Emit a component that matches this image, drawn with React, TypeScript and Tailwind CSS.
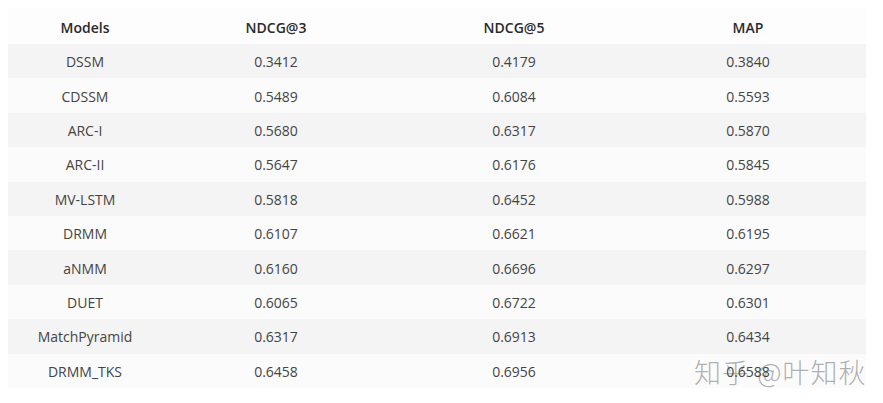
import React from "react";

const rows: [string, string, string, string][] = [
  ["DSSM", "0.3412", "0.4179", "0.3840"],
  ["CDSSM", "0.5489", "0.6084", "0.5593"],
  ["ARC-I", "0.5680", "0.6317", "0.5870"],
  ["ARC-II", "0.5647", "0.6176", "0.5845"],
  ["MV-LSTM", "0.5818", "0.6452", "0.5988"],
  ["DRMM", "0.6107", "0.6621", "0.6195"],
  ["aNMM", "0.6160", "0.6696", "0.6297"],
  ["DUET", "0.6065", "0.6722", "0.6301"],
  ["MatchPyramid", "0.6317", "0.6913", "0.6434"],
  ["DRMM_TKS", "0.6458", "0.6956", "0.6588"],
];

export default function App() {
  return (
    <div
      className="relative w-[883px] h-[403px] bg-white overflow-hidden"
      style={{ fontFamily: '"Open Sans", "Noto Sans", "Noto Sans CJK SC", sans-serif' }}
    >
      <div className="ml-[8px] mt-[8px] w-[858px] bg-[#f8f8f8] text-[14px] text-[#444]">
        <div className="grid grid-cols-[154px_228px_248px_228px] h-[36px] pt-[2px] items-center font-semibold text-[#2a2a2a] bg-[#fdfdfd]">
          <div className="text-center">Models</div>
          <div className="text-center">NDCG@3</div>
          <div className="text-center">NDCG@5</div>
          <div className="text-center pr-[8px]">MAP</div>
        </div>
        {rows.map((r, i) => (
          <div
            key={r[0]}
            className={
              "grid grid-cols-[154px_228px_248px_228px] h-[34.4px] pt-[1px] items-center " +
              (i % 2 === 0 ? "bg-[#f4f4f4]" : "bg-[#fbfbfb]")
            }
          >
            <div className="text-center">{r[0]}</div>
            <div className="text-center">{r[1]}</div>
            <div className="text-center">{r[2]}</div>
            <div className="text-center pr-[8px]">
              <span className="relative z-10">{r[3]}</span>
            </div>
          </div>
        ))}
      </div>
      <div
        className="absolute left-[694px] top-[355px] text-[27px] leading-[34px] text-[#b0b0b0] tracking-[1px]"
        style={{
          fontFamily: '"Noto Sans CJK SC", "Noto Sans", sans-serif',
          textShadow: "1px 0 0 #fff, -1px 0 0 #fff, 0 1px 0 #fff, 0 -1px 0 #fff",
          fontWeight: 300,
        }}
      >
        知乎 @叶知秋
      </div>
    </div>
  );
}
